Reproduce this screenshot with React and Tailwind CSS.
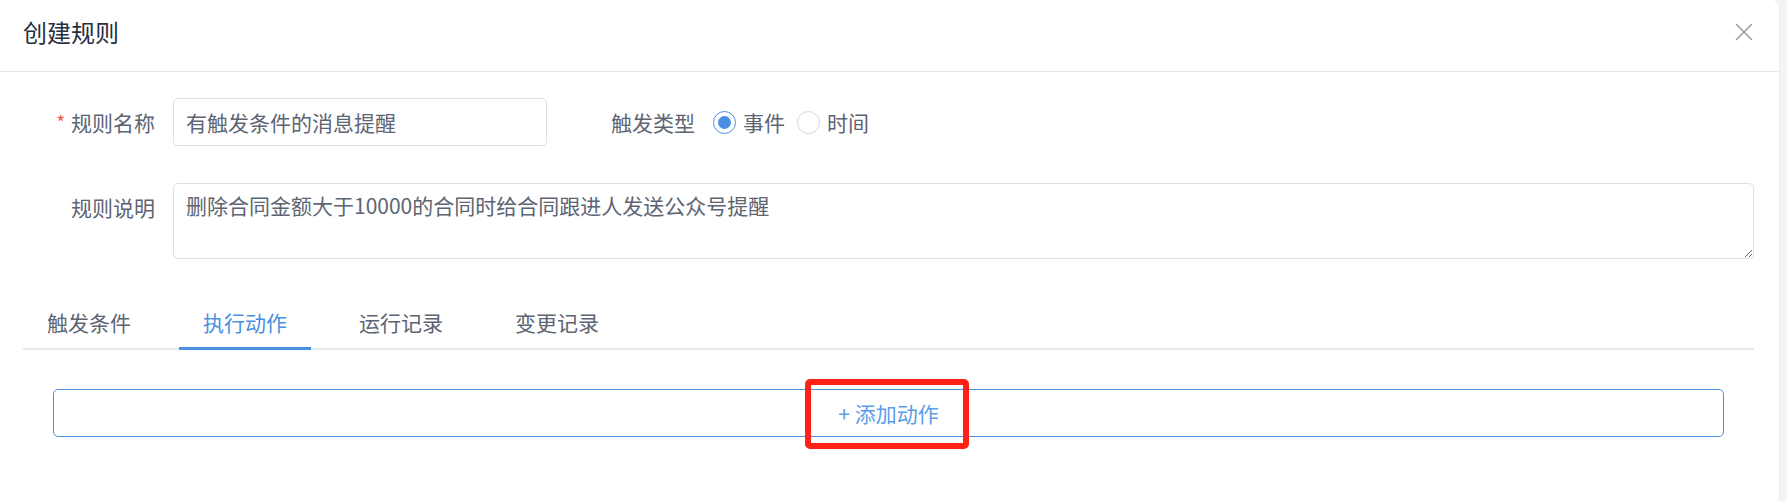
import { useState } from 'react'

const tabs = ['触发条件', '执行动作', '运行记录', '变更记录']

const font = { fontFamily: '"Noto Sans CJK SC", "Liberation Sans", sans-serif' }

function Radio({ checked, label, onClick }) {
  return (
    <button onClick={onClick} className="flex items-center gap-[7px]">
      {checked ? (
        <span className="w-[23px] h-[23px] rounded-full border-[1.5px] border-[#4a90e2] bg-white flex items-center justify-center">
          <span className="w-[13px] h-[13px] rounded-full bg-[#4a90e2]" />
        </span>
      ) : (
        <span className="w-[23px] h-[23px] rounded-full border border-[#d6d6d6] bg-white" />
      )}
      <span className="text-[21px] leading-[24px] text-[#5d6473]">{label}</span>
    </button>
  )
}

export default function App() {
  const [activeTab, setActiveTab] = useState('执行动作')
  const [trigger, setTrigger] = useState('事件')

  return (
    <div className="w-full h-[501px] bg-[#f4f4f4] flex" style={font}>
      <div className="w-[1780px] h-full bg-white rounded-tr-[8px] border-r border-[#ececec]">

        <div className="h-[72px] border-b border-[#e6e6e6] flex justify-between pl-[23px] pr-[26px]">
          <h1 className="pt-[20px] text-[24px] leading-[24px] text-[#26303f]">创建规则</h1>
          <button className="mt-[23px] w-[18px] h-[18px] text-[#9a9a9a]">
            <svg viewBox="0 0 18 18" width="18" height="18" fill="none" stroke="currentColor" strokeWidth="1.5">
              <path d="M1 1 L17 17 M17 1 L1 17" />
            </svg>
          </button>
        </div>

        <div className="pl-[23px] pr-[25px] pt-[26px]">

          <div className="flex items-center h-[48px]">
            <label className="w-[150px] pr-[18px] flex justify-end items-center text-[21px] leading-[24px] text-[#5d6473]">
              <span className="text-[#f0603c] mr-[6px] text-[19px]">*</span>规则名称
            </label>
            <input
              defaultValue="有触发条件的消息提醒"
              className="w-[374px] h-[48px] border border-[#dcdfe6] rounded-[5px] px-[12px] text-[21px] text-[#5d6473] outline-none"
              style={font}
            />
            <label className="ml-[16px] w-[150px] pr-[18px] text-right text-[21px] leading-[24px] text-[#5d6473]">触发类型</label>
            <div className="flex items-center gap-[12px]">
              <Radio checked={trigger === '事件'} label="事件" onClick={() => setTrigger('事件')} />
              <Radio checked={trigger === '时间'} label="时间" onClick={() => setTrigger('时间')} />
            </div>
          </div>

          <div className="flex mt-[37px]">
            <label className="w-[150px] pr-[18px] pt-[12px] text-right text-[21px] leading-[24px] text-[#5d6473]">规则说明</label>
            <textarea
              defaultValue="删除合同金额大于10000的合同时给合同跟进人发送公众号提醒"
              className="flex-1 h-[76px] border border-[#dcdfe6] rounded-[5px] px-[12px] py-[6px] text-[21px] leading-[31px] text-[#5d6473] outline-none"
              style={font}
            />
          </div>

          <div className="flex gap-[24px] border-b-2 border-[#e4e7ed] mt-[38px]">
            {tabs.map(tab => (
              <button
                key={tab}
                onClick={() => setActiveTab(tab)}
                className={`h-[53px] px-[24px] -mb-[2px] border-b-[3px] text-[21px] leading-[24px] ${
                  activeTab === tab
                    ? 'border-[#4a90e2] text-[#4a90e2]'
                    : 'border-transparent text-[#5d6473]'
                }`}
              >
                {tab}
              </button>
            ))}
          </div>

          <div className="px-[30px] pt-[39px]">
            <div className="relative">
              <button className="w-full h-[48px] border border-[#4a90e2] rounded-[5px] text-[21px] leading-[24px] text-[#5a9de8] flex items-center justify-center">
                + 添加动作
              </button>
              <div className="absolute left-[752px] top-[-10px] w-[164px] h-[70px] border-[6px] border-[#ff2016] rounded-[5px] pointer-events-none" />
            </div>
          </div>
        </div>
      </div>
    </div>
  )
}
